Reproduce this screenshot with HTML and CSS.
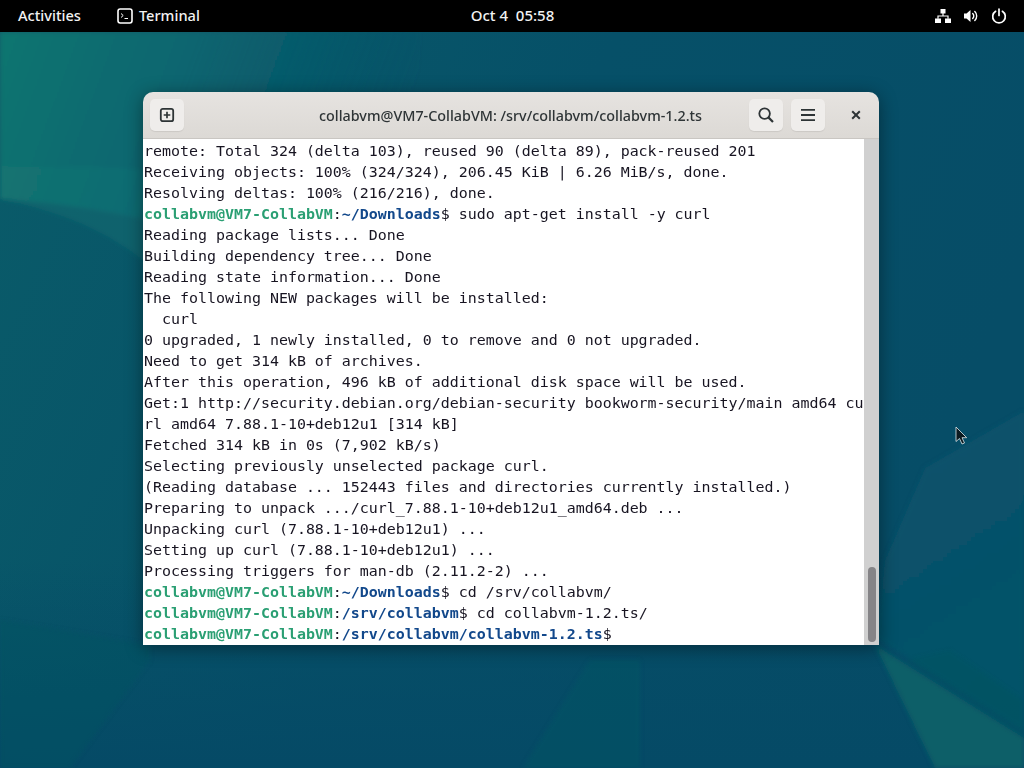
FILE: index.html
```html
<!DOCTYPE html>
<html lang="en">
<head>
<meta charset="utf-8">
<title>Terminal</title>
<link rel="stylesheet" href="styles.css">
</head>
<body>
<div class="desktop">
  <svg class="wallpaper" viewBox="0 0 1024 768" preserveAspectRatio="none" aria-hidden="true">
    <defs>
      <linearGradient id="base" x1="0" y1="0" x2="1" y2="0.35">
        <stop offset="0" stop-color="#0a5c69"/>
        <stop offset="0.55" stop-color="#065068"/>
        <stop offset="1" stop-color="#064d67"/>
      </linearGradient>
      <linearGradient id="sky" x1="0" y1="0" x2="1" y2="0.2">
        <stop offset="0" stop-color="#11756f"/>
        <stop offset="0.45" stop-color="#0c6570"/>
        <stop offset="1" stop-color="#085669" stop-opacity="0"/>
      </linearGradient>
      <linearGradient id="bottom" x1="0" y1="0" x2="0" y2="1">
        <stop offset="0" stop-color="#054a66" stop-opacity="0"/>
        <stop offset="1" stop-color="#054a66"/>
      </linearGradient>
      <linearGradient id="facet" x1="0" y1="0" x2="0.3" y2="1">
        <stop offset="0" stop-color="#0f556f"/>
        <stop offset="1" stop-color="#08596a"/>
      </linearGradient>
      <filter id="soft" x="-5%" y="-5%" width="110%" height="110%">
        <feGaussianBlur stdDeviation="2"/>
      </filter>
    </defs>
    <rect width="1024" height="768" fill="url(#base)"/>
    <g filter="url(#soft)">
      <path d="M0 32H420V120L260 260C200 225 90 205 0 199Z" fill="url(#sky)"/>
      <path d="M0 166C60 168 110 165 145 170V262C100 225 50 210 0 199Z" fill="#1c7a77" opacity=".3"/>
    </g>
    <rect y="560" width="1024" height="208" fill="url(#bottom)"/>
    <g filter="url(#soft)">
      <path d="M0 620V768H70L150 660V645Z" fill="#0a5560" opacity=".4"/>
      <polygon points="590,660 640,660 640,768 523,768" fill="#0a5a64" opacity=".35"/>
      <polygon points="925,468 1024,411 1024,731 875,637 885,560" fill="url(#facet)" opacity=".6"/>
      <polygon points="875,645 1024,738 1024,768 935,768" fill="#0a5f68"/>
      <polygon points="905,660 1024,738 1024,700 950,650" fill="#075660" opacity=".4"/>
    </g>
  </svg>

  <header class="panel">
    <div class="panel-left">
      <span class="panel-label">Activities</span>
      <span class="app-menu">
        <svg class="app-icon" viewBox="0 0 16 16" aria-hidden="true">
          <rect x="1" y="1" width="14" height="14" rx="2.2" fill="none" stroke="#fff" stroke-width="1.6"/>
          <path d="M4 5.5l2.2 2L4 9.5M7.5 10.5h3.5" fill="none" stroke="#fff" stroke-width="1"/>
        </svg>
        <span class="panel-label">Terminal</span>
      </span>
    </div>
    <div class="clock">Oct 4&nbsp; 05:58</div>
    <div class="status">
      <svg class="status-icon" viewBox="0 0 16 16" aria-hidden="true">
        <path d="M5.5 1h5v4.5h-5zM0 10.5h6V15H0zM10 10.5h6V15h-6z" fill="#fff"/>
        <path d="M7.4 5h1.2v2.4H13.6v3.4h-1.2V8.6H3.6v2.2H2.4V7.4h5z" fill="#fff"/>
      </svg>
      <svg class="status-icon" viewBox="0 0 16 16" aria-hidden="true">
        <path d="M1 5.5h2.5L7.5 2v12L3.5 10.5H1z" fill="#fff"/>
        <path d="M9.7 5.500a3.500 3.500 0 0 1 0 5M11.800 3.500a6.300 6.300 0 0 1 0 9" fill="none" stroke="#fff" stroke-width="1.4" stroke-linecap="round"/>
      </svg>
      <svg class="status-icon" viewBox="0 0 16 16" aria-hidden="true">
        <path d="M4.6 3.300a6.300 6.300 0 1 0 6.800 0" fill="none" stroke="#fff" stroke-width="1.7" stroke-linecap="round"/>
        <path d="M8 1v6.500" fill="none" stroke="#fff" stroke-width="1.7" stroke-linecap="round"/>
      </svg>
    </div>
  </header>

  <section class="window">
    <div class="titlebar">
      <div class="bar-start">
        <button class="btn" type="button" aria-label="New tab">
          <svg class="btn-icon" viewBox="0 0 16 16" aria-hidden="true">
            <rect x="1.8" y="1.8" width="12.4" height="12.4" rx="2" fill="none" stroke="#2e3436" stroke-width="1.8"/>
            <path d="M8 4.700v6.600M4.700 8h6.600" fill="none" stroke="#2e3436" stroke-width="1.7"/>
          </svg>
        </button>
      </div>
      <div class="title">collabvm@VM7-CollabVM: /srv/collabvm/collabvm-1.2.ts</div>
      <div class="bar-end">
        <button class="btn" type="button" aria-label="Search">
          <svg class="btn-icon" viewBox="0 0 16 16" aria-hidden="true">
            <circle cx="6.6" cy="6.6" r="5.3" fill="none" stroke="#2e3436" stroke-width="1.8"/>
            <path d="M10.4 10.4L15 15" fill="none" stroke="#2e3436" stroke-width="2.2"/>
          </svg>
        </button>
        <button class="btn" type="button" aria-label="Menu">
          <svg class="btn-icon" viewBox="0 0 16 16" aria-hidden="true">
            <path d="M1 2.800h14M1 8h14M1 13.200h14" fill="none" stroke="#2e3436" stroke-width="1.8"/>
          </svg>
        </button>
        <button class="close" type="button" aria-label="Close">
          <svg class="close-icon" viewBox="0 0 10 10" aria-hidden="true">
            <path d="M1.200 1.200l7.600 7.600M8.800 1.200L1.200 8.800" fill="none" stroke="#2e3436" stroke-width="2"/>
          </svg>
        </button>
      </div>
    </div>
    <div class="body">
<pre class="term">remote: Total 324 (delta 103), reused 90 (delta 89), pack-reused 201
Receiving objects: 100% (324/324), 206.45 KiB | 6.26 MiB/s, done.
Resolving deltas: 100% (216/216), done.
<b class="g">collabvm@VM7-CollabVM</b>:<b class="b">~/Downloads</b>$ sudo apt-get install -y curl
Reading package lists... Done
Building dependency tree... Done
Reading state information... Done
The following NEW packages will be installed:
  curl
0 upgraded, 1 newly installed, 0 to remove and 0 not upgraded.
Need to get 314 kB of archives.
After this operation, 496 kB of additional disk space will be used.
Get:1 http://security.debian.org/debian-security bookworm-security/main amd64 cu
rl amd64 7.88.1-10+deb12u1 [314 kB]
Fetched 314 kB in 0s (7,902 kB/s)
Selecting previously unselected package curl.
(Reading database ... 152443 files and directories currently installed.)
Preparing to unpack .../curl_7.88.1-10+deb12u1_amd64.deb ...
Unpacking curl (7.88.1-10+deb12u1) ...
Setting up curl (7.88.1-10+deb12u1) ...
Processing triggers for man-db (2.11.2-2) ...
<b class="g">collabvm@VM7-CollabVM</b>:<b class="b">~/Downloads</b>$ cd /srv/collabvm/
<b class="g">collabvm@VM7-CollabVM</b>:<b class="b">/srv/collabvm</b>$ cd collabvm-1.2.ts/
<b class="g">collabvm@VM7-CollabVM</b>:<b class="b">/srv/collabvm/collabvm-1.2.ts</b>$ </pre>
      <div class="scrollbar"><div class="thumb"></div></div>
    </div>
  </section>

  <svg class="cursor" viewBox="0 0 14 20" aria-hidden="true">
    <path d="M1 1v14.500l3.500-3 2.500 5.500 2.500-1-2.500-5.300h4.700z" fill="#0c1a20" stroke="#dfeaec" stroke-width=".8"/>
  </svg>
</div>
</body>
</html>
```
FILE: styles.css
```css
* { box-sizing: border-box; }
html, body { margin: 0; height: 100%; }
body { overflow: hidden; background: #065068; }

.desktop {
  position: relative;
  width: 1024px;
  height: 768px;
  overflow: hidden;
}
.wallpaper {
  position: absolute;
  inset: 0;
  width: 1024px;
  height: 768px;
}

.panel {
  position: relative;
  height: 32px;
  background: #000;
  color: #f2f2f2;
  font: 500 14.6px "Noto Sans", sans-serif;
  display: grid;
  grid-template-columns: 1fr auto 1fr;
  align-items: center;
  padding: 0 17px 3px 18px;
}
.panel-left { display: flex; align-items: center; gap: 36px; }
.panel-label { display: block; }
.app-menu { display: flex; align-items: center; gap: 6px; }
.app-icon { width: 16px; height: 16px; margin-top: 2px; }
.clock { text-align: center; font-size: 15px; }
.status { display: flex; justify-content: flex-end; gap: 12px; margin-top: 3px; }
.status-icon { width: 16px; height: 16px; }

.window {
  position: absolute;
  left: 143px;
  top: 92px;
  width: 736px;
  height: 553px;
  border-radius: 10px 10px 0 0;
  overflow: hidden;
  box-shadow: 0 3px 18px rgba(0, 0, 0, .42);
  display: flex;
  flex-direction: column;
}
.titlebar {
  height: 47px;
  flex: none;
  background: linear-gradient(#e6e3e0, #dcd9d5);
  border-bottom: 1px solid #c9c6c2;
  display: grid;
  grid-template-columns: 1fr auto 1fr;
  align-items: center;
  padding: 0 8px 0 7px;
}
.bar-start { display: flex; }
.bar-end { display: flex; justify-content: flex-end; align-items: center; gap: 8px; }
.btn {
  width: 34px;
  height: 32px;
  border: 0;
  padding: 0;
  border-radius: 5px;
  background: #efedeb;
  box-shadow: 0 1px 1px rgba(0, 0, 0, .08);
  display: flex;
  align-items: center;
  justify-content: center;
}
.btn-icon { width: 16px; height: 16px; }
.title {
  text-align: center;
  font: 500 14.35px "Noto Sans", sans-serif;
  color: #2e3436;
  white-space: nowrap;
}
.close {
  width: 30px;
  height: 32px;
  margin-left: 8px;
  border: 0;
  padding: 0;
  background: none;
  display: flex;
  align-items: center;
  justify-content: center;
}
.close-icon { width: 10px; height: 10px; }

.body {
  flex: 1;
  display: flex;
  min-height: 0;
  background: #fff;
}
.term {
  flex: 1;
  margin: 0;
  padding: 2px 0 0 1px;
  font: 14.95px/21px "DejaVu Sans Mono", monospace;
  color: #171421;
  overflow: hidden;
}
.g { color: #2a9f73; }
.b { color: #12488b; }
.scrollbar {
  width: 15px;
  flex: none;
  background: #d0d0d0;
  display: flex;
  flex-direction: column;
  justify-content: flex-end;
  align-items: center;
  padding: 0 0 3px 1px;
}
.thumb {
  width: 8px;
  height: 75px;
  border-radius: 4px;
  background: #858487;
}

.cursor {
  position: absolute;
  left: 955px;
  top: 426px;
  width: 14px;
  height: 20px;
}
```
